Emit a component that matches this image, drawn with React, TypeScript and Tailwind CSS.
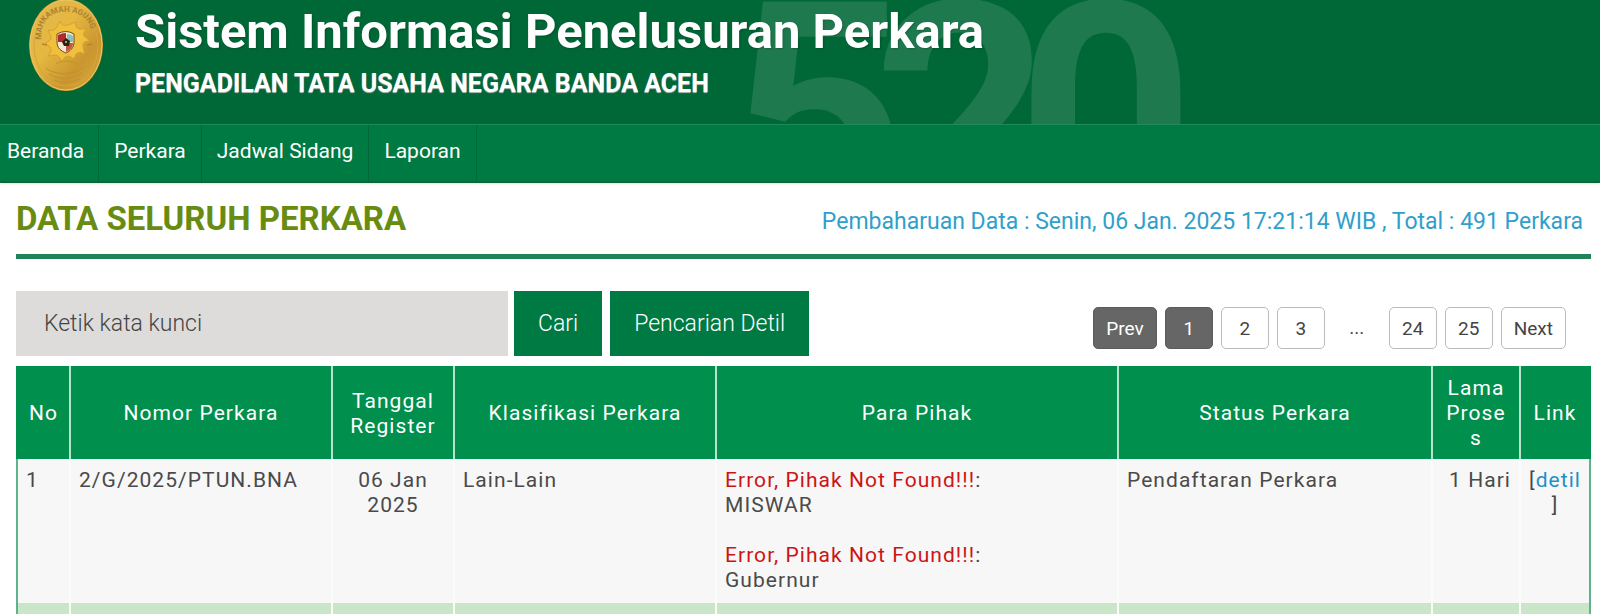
type Row = {
  no: number;
  nomor: string;
  tanggal: string;
  klasifikasi: string;
  pihak: string[];
  status: string;
  lama: string;
};

const menu = ["Perkara", "Jadwal Sidang", "Laporan"];

const columns = [
  { label: "No", width: "w-[53px]" },
  { label: "Nomor Perkara", width: "w-[262px]" },
  { label: "Tanggal Register", width: "w-[122px]" },
  { label: "Klasifikasi Perkara", width: "w-[262px]" },
  { label: "Para Pihak", width: "" },
  { label: "Status Perkara", width: "w-[314px]" },
  { label: "Lama Proses", width: "w-[88px]" },
  { label: "Link", width: "w-[70px]" },
];

const rows: Row[] = [
  {
    no: 1,
    nomor: "2/G/2025/PTUN.BNA",
    tanggal: "06 Jan 2025",
    klasifikasi: "Lain-Lain",
    pihak: ["MISWAR", "Gubernur"],
    status: "Pendaftaran Perkara",
    lama: "1 Hari",
  },
  {
    no: 2,
    nomor: "1/G/2025/PTUN.BNA",
    tanggal: "06 Jan 2025",
    klasifikasi: "Lain-Lain",
    pihak: [""],
    status: "Pendaftaran Perkara",
    lama: "1 Hari",
  },
];

function Logo() {
  return (
    <svg className="w-[76px] h-[92px] shrink-0" viewBox="0 0 76 92">
      <defs>
        <linearGradient id="gold" x1="0" y1="0" x2="1" y2="1">
          <stop offset="0" stopColor="#dfb94e" />
          <stop offset="0.4" stopColor="#e6b741" />
          <stop offset="0.7" stopColor="#c9962f" />
          <stop offset="1" stopColor="#dcab40" />
        </linearGradient>
        <path id="arc" d="M13 40C13 18 24 12 38 12s26 6 26 28" />
      </defs>
      <ellipse cx="38" cy="45" rx="37" ry="46" fill="#c78f25" />
      <ellipse cx="38" cy="45" rx="36" ry="45" fill="url(#gold)" stroke="#ecc96b" strokeWidth="1" />
      <ellipse cx="38" cy="46" rx="32" ry="40" fill="none" stroke="#d6a53b" strokeWidth="1" />
      <text fontSize="8" fontWeight="700" fill="#a98236" fontFamily="Roboto, sans-serif">
        <textPath href="#arc">MAHKAMAH AGUNG</textPath>
      </text>
      {/* Sun rays */}
      <path
        d="M32 21c1 4 4 5 7 4 5-1 8-3 9-3-1 4 0 6 3 7 3 0 6 0 8-1-3 3-4 6-3 8l6 5c-4 0-7 1-7 4 0 3 1 6 2 9-4-2-7-2-9 0l-2 5c-4-3-7-4-10-1l-2 4c-2-5-4-7-7-7l-7 1c3-4 4-6 2-9l-5-4c4-1 6-3 6-6l-3-7c4 1 7 0 8-2 2-2 3-5 4-7z"
        fill="#f0bf3c"
        stroke="#cf9a2d"
        strokeWidth="0.8"
      />
      <path
        d="M18 68c8 7 28 8 38-1M21 74c9 6 25 6 33-1M28 64c6-4 14-4 21 0M26 80c8 3 18 3 25-1"
        fill="none"
        stroke="#c2902f"
        strokeWidth="1"
      />
      <path d="M14 44l5 1M59 45l5-1" stroke="#b88429" strokeWidth="1.5" />
      {/* Shield */}
      <path d="M29 34q9-5 17 0v8c0 6-4 9-8 11-5-2-9-5-9-11z" fill="#f4ead2" stroke="#6d4b21" strokeWidth="1" />
      <path d="M30 35q4-2 8-2v9h-8z" fill="#b3282d" />
      <path d="M39 34q4 0 6 2v6h-6z" fill="#8cc0b5" />
      <path d="M38 43h7c0 5-3 7-7 9z" fill="#c4573f" />
      <path d="M38 38l4 3-1 5h-5l-2-4z" fill="#29211c" />
      <circle cx="38" cy="42" r="1" fill="#e6c35c" />
    </svg>
  );
}

function PageButton({ label, active }: { label: string; active?: boolean }) {
  return (
    <button
      className={
        active
          ? "h-[42px] min-w-12 px-3 rounded-[5px] border border-[#5c5c5c] bg-[#666] text-white"
          : "h-[42px] min-w-12 px-3 rounded-[5px] border border-[#bbb] bg-white text-[#444]"
      }
    >
      {label}
    </button>
  );
}

export default function App() {
  return (
    <div className="h-screen overflow-hidden bg-white font-['Roboto',sans-serif] text-[21px] leading-[25px] text-[#4a4a4a]">
      <header className="relative h-[124px] overflow-hidden bg-[#006736] text-white">
        <div
          aria-hidden="true"
          className="absolute left-[729px] -top-[34px] flex text-[310px] leading-[300px] font-bold text-white/12"
        >
          <span className="w-[144px]">5</span>
          <span className="w-[144px]">2</span>
          <span className="w-[144px]">0</span>
        </div>
        <div className="relative flex gap-[31px] pl-7">
          <Logo />
          <div>
            <h1 className="mt-1 text-[49px] leading-[56px] font-bold [text-shadow:1px_1px_2px_rgba(0,0,0,0.2)]">
              Sistem Informasi Penelusuran Perkara
            </h1>
            <h2 className="mt-2 text-[25px] leading-8 font-bold [text-shadow:0_1px_1px_#bbb]">
              PENGADILAN TATA USAHA NEGARA BANDA ACEH
            </h2>
          </div>
        </div>
      </header>

      <nav className="flex h-[59px] border-t border-b-2 border-t-[#1f8a58] border-b-[#11633c] bg-[#007a43] text-white shadow-sm">
        <a href="#" className="flex items-center pl-[7px] pr-3.5 pb-1 border-r border-[#006736]">
          Beranda
        </a>
        {menu.map((item) => (
          <a key={item} href="#" className="flex items-center px-[15px] pb-1 border-r border-[#006736]">
            {item}
          </a>
        ))}
      </nav>

      <main className="pl-4 pr-[9px]">
        <div className="flex items-center justify-between h-[76px] pr-2 border-b-[5px] border-[#22835a]">
          <h3 className="text-[33px] leading-10 font-bold text-[#688c12]">DATA SELURUH PERKARA</h3>
          <p className="pt-1.5 text-[23px] text-[#2fa0cb]">
            Pembaharuan Data : Senin, 06 Jan. 2025 17:21:14 WIB , Total : 491 Perkara
          </p>
        </div>

        <div className="flex items-start justify-between pt-8 pb-2.5 pr-[25px]">
          <form className="flex text-[23px] font-light" onSubmit={(e) => e.preventDefault()}>
            <input
              type="text"
              aria-label="Kata kunci"
              placeholder="Ketik kata kunci"
              className="w-[492px] h-[65px] px-7 bg-[#dddcda] placeholder-[#444] focus:outline-none"
            />
            <button type="submit" className="ml-1.5 h-[65px] px-6 bg-[#007a43] text-white">
              Cari
            </button>
            <button type="button" className="ml-2 h-[65px] px-6 bg-[#007a43] text-white">
              Pencarian Detil
            </button>
          </form>
          <div className="mt-4 flex gap-2 text-[19px]">
            <PageButton label="Prev" active />
            <PageButton label="1" active />
            <PageButton label="2" />
            <PageButton label="3" />
            <span className="w-12 leading-[42px] text-center">...</span>
            <PageButton label="24" />
            <PageButton label="25" />
            <PageButton label="Next" />
          </div>
        </div>

        <table className="w-full table-fixed border-collapse border-2 border-[#5db38b] tracking-wider">
          <thead>
            <tr className="bg-[#008f4c] text-white">
              {columns.map((col) => (
                <th
                  key={col.label}
                  className={`${col.width} px-2 py-2 font-normal break-words border-x-2 border-t-2 border-[#b5e3cb] border-t-[#008f4c] first:border-l-[#008f4c] last:border-r-[#008f4c]`}
                >
                  {col.label}
                </th>
              ))}
            </tr>
          </thead>
          <tbody>
            {rows.map((row) => (
              <tr
                key={row.no}
                className="h-36 align-top bg-[#f7f7f7] even:bg-[#c9e6c8] [&>td]:px-2 [&>td]:pt-[9px] [&>td+td]:border-l-2 [&>td+td]:border-l-[#fbfdfb]"
              >
                <td>{row.no}</td>
                <td>{row.nomor}</td>
                <td className="text-center">{row.tanggal}</td>
                <td>{row.klasifikasi}</td>
                <td>
                  {row.pihak.map((nama) => (
                    <p key={nama} className="mb-[25px] last:mb-0">
                      <span className="text-[#cc1414]">Error, Pihak Not Found!!!</span>:
                      <br />
                      {nama}
                    </p>
                  ))}
                </td>
                <td>{row.status}</td>
                <td className="text-right">{row.lama}</td>
                <td className="text-center break-words">
                  [
                  <a href="#" className="text-[#1e90c8]">
                    detil
                  </a>
                  ]
                </td>
              </tr>
            ))}
          </tbody>
        </table>
      </main>
    </div>
  );
}
